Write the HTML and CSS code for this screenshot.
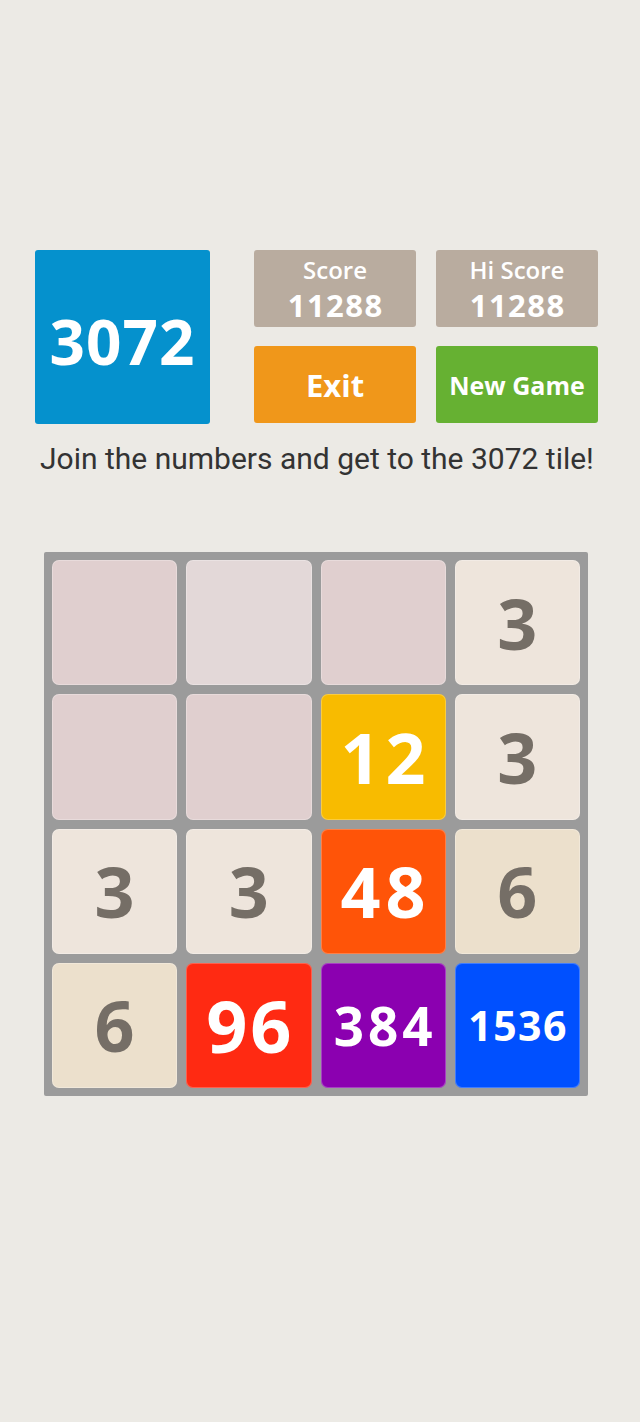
FILE: index.html
```html
<!DOCTYPE html>
<html lang="en">
<head>
<meta charset="utf-8">
<title>3072</title>
<link rel="stylesheet" href="styles.css">
</head>
<body>
<main class="page">
  <header class="top">
    <div class="logo">3072</div>
    <div class="panel">
      <div class="stat"><span class="stat-label">Score</span><span class="stat-value">11288</span></div>
      <div class="stat"><span class="stat-label">Hi Score</span><span class="stat-value">11288</span></div>
      <button class="btn btn-exit">Exit</button>
      <button class="btn btn-new">New Game</button>
    </div>
  </header>
  <p class="intro">Join the numbers and get to the 3072 tile!</p>
  <section class="board">
    <div class="tile empty"></div>
    <div class="tile empty light"></div>
    <div class="tile empty"></div>
    <div class="tile t3">3</div>
    <div class="tile empty"></div>
    <div class="tile empty"></div>
    <div class="tile t12">12</div>
    <div class="tile t3">3</div>
    <div class="tile t3">3</div>
    <div class="tile t3">3</div>
    <div class="tile t48">48</div>
    <div class="tile t6">6</div>
    <div class="tile t6">6</div>
    <div class="tile t96">96</div>
    <div class="tile t384">384</div>
    <div class="tile t1536">1536</div>
  </section>
</main>
</body>
</html>
```

FILE: styles.css
```css
html, body {
  margin: 0;
  padding: 0;
  background: #eceae5;
}
body {
  font-family: "Open Sans", "DejaVu Sans", sans-serif;
}
.page {
  width: 640px;
  height: 1422px;
  box-sizing: border-box;
  padding: 250px 0 0 35px;
}
.top {
  display: flex;
  align-items: flex-start;
  gap: 44px;
}
.logo {
  width: 175px;
  height: 174px;
  box-sizing: border-box;
  padding-top: 8px;
  background: #0591cd;
  border-radius: 3px;
  color: #fff;
  font-weight: 700;
  font-size: 62px;
  display: flex;
  align-items: center;
  justify-content: center;
  letter-spacing: 1px;
}
.panel {
  display: grid;
  grid-template-columns: 162px 162px;
  grid-template-rows: 77px 77px;
  column-gap: 20px;
  row-gap: 19px;
}
.stat {
  background: #b9ac9f;
  border-radius: 3px;
  color: #fff;
  display: flex;
  flex-direction: column;
  align-items: center;
  justify-content: center;
  gap: 10px;
}
.stat-label {
  font-size: 24px;
  font-weight: 600;
  line-height: 22px;
}
.stat-value {
  font-size: 31px;
  font-weight: 700;
  line-height: 28px;
  letter-spacing: 1.5px;
  padding-left: 1.5px;
}
.btn {
  border: none;
  margin: 0;
  padding: 0;
  border-radius: 3px;
  color: #fff;
  font-family: "Open Sans", "DejaVu Sans", sans-serif;
  font-weight: 700;
  display: flex;
  align-items: center;
  justify-content: center;
}
.btn-exit {
  background: #f0971a;
  font-size: 31px;
}
.btn-new {
  background: #66b132;
  font-size: 25px;
}
.intro {
  margin: 16px 0 0 5px;
  font-family: Roboto, "Liberation Sans", sans-serif;
  font-size: 30px;
  color: #333;
  line-height: 38px;
  white-space: nowrap;
}
.board {
  margin: 74px 0 0 9px;
  width: 544px;
  height: 544px;
  box-sizing: border-box;
  background: #9b9b9b;
  border-radius: 2px;
  padding: 8px;
  display: grid;
  grid-template-columns: repeat(4, 1fr);
  grid-template-rows: repeat(4, 1fr);
  gap: 9px;
}
.tile {
  border-radius: 7px;
  display: flex;
  align-items: center;
  justify-content: center;
  font-weight: 700;
  font-size: 70px;
  color: #fff;
  box-shadow: inset 0 0 0 1px rgba(255, 255, 255, 0.25);
}
.empty { background: #e0cfcf; }
.empty.light { background: #e3d8d8; }
.t3 { background: #eee5dc; color: #756e66; }
.t6 { background: #ece0cc; color: #756e66; }
.t12, .t48, .t96 { letter-spacing: 5px; padding-left: 5px; }
.t12 { background: #f8bb00; }
.t48 { background: #ff5408; }
.t96 { background: #ff2a12; font-size: 72px; letter-spacing: 3px; padding-left: 3px; }
.t384 { background: #8b00b0; font-size: 53px; letter-spacing: 4px; padding-left: 4px; }
.t1536 { background: #0050ff; font-size: 41px; letter-spacing: 1.5px; padding-left: 1.5px; }
```
